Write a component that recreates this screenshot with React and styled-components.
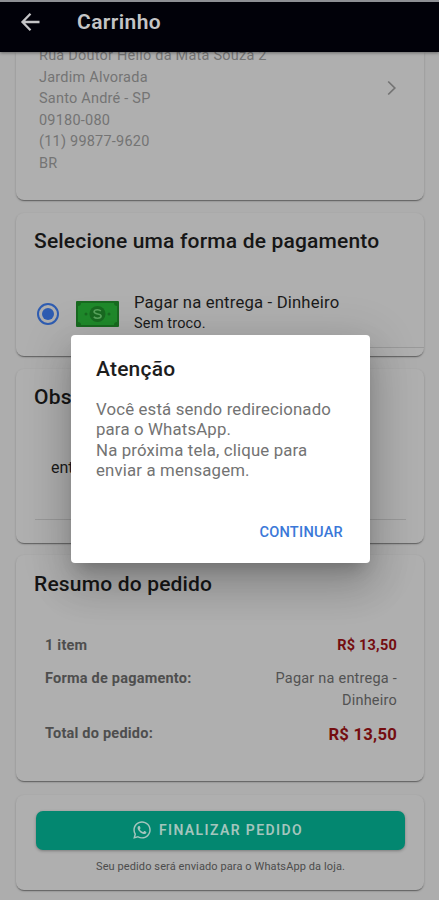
import styled, { createGlobalStyle } from "styled-components";
import { FaWhatsapp } from "react-icons/fa";

const GlobalStyle = createGlobalStyle`
  * {
    box-sizing: border-box;
  }
  body {
    margin: 0;
    font-family: Roboto, "Liberation Sans", sans-serif;
    background-color: #adadad;
  }
`;

const Wrapper = styled.div`
  position: relative;
  display: flex;
  flex-direction: column;
  width: 439px;
  height: 900px;
  overflow: hidden;
  background-color: #adadad;
`;

const Header = styled.header`
  display: flex;
  align-items: center;
  flex: none;
  height: 52px;
  padding: 0 0 10px 20px;
  border-top: 2px solid #8d8f94;
  background-color: #010109;
  color: #c4c4c6;
  box-shadow: 0 1px 3px rgba(0, 0, 0, 0.4);
  z-index: 1;
`;

const HeaderTitle = styled.h1`
  margin: 0 0 0 37px;
  font-size: 21px;
  line-height: 24px;
  font-weight: 600;
  letter-spacing: 0.4px;
`;

const Content = styled.main`
  display: flex;
  flex-direction: column;
  flex: 1;
  padding: 0 15px 0 16px;
`;

const Card = styled.section`
  flex: none;
  height: ${(props) => props.$height}px;
  margin-bottom: ${(props) => props.$gap || 13}px;
  border-radius: ${(props) => (props.$cut ? "0 0 8px 8px" : "8px")};
  background-color: #afafaf;
  box-shadow: 0 2px 1px -1px rgba(0, 0, 0, 0.28), 0 1px 2px rgba(0, 0, 0, 0.25);
`;

const CardTitle = styled.h2`
  margin: 0;
  padding: ${(props) => props.$top || 16}px 0 0 18px;
  font-size: 21px;
  line-height: 24px;
  font-weight: 500;
  letter-spacing: 0.18px;
  color: #161616;
`;

const Address = styled.div`
  display: flex;
  align-items: center;
  justify-content: space-between;
  height: 72px;
  padding: 0 27px 0 23px;
`;

const AddressLines = styled.div`
  align-self: flex-start;
  margin-top: -7px;
  font-size: 14.5px;
  line-height: 21.6px;
  letter-spacing: 0.22px;
  color: #747474;
`;

const PayRow = styled.div`
  display: flex;
  align-items: center;
  height: 74px;
  margin-top: 24px;
  padding-left: 21px;
`;

const Radio = styled.span`
  display: flex;
  align-items: center;
  justify-content: center;
  width: 22px;
  height: 22px;
  border: 2px solid #2e5cb1;
  border-radius: 50%;

  &::after {
    content: "";
    width: 12px;
    height: 12px;
    border-radius: 50%;
    background-color: #2e5cb1;
  }
`;

const Bill = styled.svg`
  margin: 0 15px 0 17px;
`;

const PayLabel = styled.div`
  margin-top: -3px;
  font-size: 16.7px;
  line-height: 21px;
  letter-spacing: 0.17px;
  color: #1b1b1b;
`;

const PayNote = styled.div`
  font-size: 14.5px;
  line-height: 21px;
`;

const Divider = styled.hr`
  margin: ${(props) => props.$margin};
  border: 0;
  border-top: 1px solid #999;
`;

const Note = styled.p`
  margin: 47px 0 0 35px;
  font-size: 16px;
  line-height: 24px;
  color: #1b1b1b;
`;

const Summary = styled.div`
  padding: 39px 27px 0 29px;
`;

const SummaryRow = styled.div`
  display: flex;
  justify-content: space-between;
  margin-bottom: ${(props) => props.$gap || 0}px;
  font-size: 14.5px;
  line-height: 22px;
  letter-spacing: 0.22px;
  color: #525252;
`;

const Label = styled.span`
  font-weight: 700;
  color: #4e4e4e;
`;

const Value = styled.span`
  width: 130px;
  text-align: right;
`;

const Price = styled.span`
  padding-top: ${(props) => (props.$total ? 1 : 0)}px;
  font-size: ${(props) => (props.$total ? 16.7 : 14.5)}px;
  font-weight: 700;
  color: #740d10;
`;

const Finish = styled.div`
  display: flex;
  flex-direction: column;
  align-items: center;
  padding: 16px 19px 0 20px;
`;

const FinishButton = styled.button`
  display: flex;
  align-items: center;
  justify-content: center;
  gap: 7px;
  width: 100%;
  height: 39px;
  padding: 0 6px 2px 0;
  border: 0;
  border-radius: 7px;
  background-color: #038770;
  box-shadow: 0 1px 3px rgba(0, 0, 0, 0.3);
  font-family: inherit;
  font-size: 14px;
  font-weight: 600;
  letter-spacing: 1.4px;
  color: #a4c5bd;
`;

const Hint = styled.p`
  margin: 10px 0 0;
  font-size: 11px;
  line-height: 14px;
  letter-spacing: 0.1px;
  color: #4c4c4c;
`;

const Overlay = styled.div`
  position: absolute;
  inset: 0;
  display: flex;
  align-items: center;
  justify-content: center;
  padding: 0 0 2px 2px;
  z-index: 2;
`;

const Dialog = styled.div`
  display: flex;
  flex-direction: column;
  width: 299px;
  height: 228px;
  padding: 22px 20px 20px 25px;
  border-radius: 4px;
  background-color: #fff;
  box-shadow: 0 11px 15px -7px rgba(0, 0, 0, 0.2),
    0 24px 38px 3px rgba(0, 0, 0, 0.14), 0 9px 46px 8px rgba(0, 0, 0, 0.12);
`;

const DialogTitle = styled.h2`
  margin: 0;
  font-size: 21px;
  line-height: 24px;
  font-weight: 500;
  letter-spacing: 0.2px;
  color: #1d1d1d;
`;

const DialogText = styled.p`
  margin: 18px 0 0;
  font-size: 16.8px;
  line-height: 20.4px;
  letter-spacing: 0.16px;
  color: #737373;
`;

const DialogButton = styled.button`
  align-self: flex-end;
  margin-top: auto;
  padding: 0 7px 0 0;
  border: 0;
  background: none;
  font-family: inherit;
  font-size: 14.6px;
  line-height: 22px;
  font-weight: 500;
  letter-spacing: 0.25px;
  color: #3b78d8;
`;

const BackArrow = () => (
  <svg width="20" height="20" viewBox="0 0 20 20" fill="none" stroke="currentColor" strokeWidth="2.3">
    <path d="M19.5 10H3M10.5 1.8L2.5 10l8 8.2" />
  </svg>
);

const Chevron = () => (
  <svg width="10" height="16" viewBox="0 0 10 16" fill="none" stroke="#737373" strokeWidth="1.7">
    <path d="M1.2 1.5L7.8 8l-6.6 6.5" />
  </svg>
);

const Money = () => (
  <Bill width="43" height="26" viewBox="0 0 43 26">
    <rect width="43" height="26" rx="1" fill="#186a20" />
    <path d="M5 2h33a3 3 0 0 0 3 3v16a3 3 0 0 0-3 3H5a3 3 0 0 0-3-3V5a3 3 0 0 0 3-3z" fill="#1f8a2b" />
    <circle cx="21.5" cy="13" r="8" fill="#186a20" />
    <circle cx="10" cy="13" r="1.5" fill="#186a20" />
    <circle cx="33" cy="13" r="1.5" fill="#186a20" />
    <path
      d="M24.8 10c-.7-.9-1.900-1.300-3.300-1.300-2 0-3.400.8-3.400 2.100 0 3 7 1.300 7 4.300 0 1.400-1.500 2.200-3.600 2.200-1.600 0-3-.5-3.700-1.500"
      fill="none"
      stroke="#58a35c"
      strokeWidth="1.6"
    />
  </Bill>
);

function App() {
  return (
    <Wrapper>
      <GlobalStyle />
      <Header>
        <BackArrow />
        <HeaderTitle>Carrinho</HeaderTitle>
      </Header>
      <Content>
        <Card $height={148} $cut>
          <Address>
            <AddressLines>
              Rua Doutor Hélio da Mata Souza 2
              <br />
              Jardim Alvorada
              <br />
              Santo André - SP
              <br />
              09180-080
              <br />
              (11) 99877-9620
              <br />
              BR
            </AddressLines>
            <Chevron />
          </Address>
        </Card>
        <Card $height={143}>
          <CardTitle>Selecione uma forma de pagamento</CardTitle>
          <PayRow>
            <Radio />
            <Money />
            <PayLabel>
              Pagar na entrega - Dinheiro
              <PayNote>Sem troco.</PayNote>
            </PayLabel>
          </PayRow>
          <Divider $margin="-4px 0 0 118px" />
        </Card>
        <Card $height={174} $gap={12}>
          <CardTitle>Obs</CardTitle>
          <Note>ent</Note>
          <Divider $margin="39px 18px 0 19px" />
        </Card>
        <Card $height={226} $gap={14}>
          <CardTitle $top={17}>Resumo do pedido</CardTitle>
          <Summary>
            <SummaryRow $gap={11}>
              <Label>1 item</Label>
              <Price>R$ 13,50</Price>
            </SummaryRow>
            <SummaryRow $gap={11}>
              <Label>Forma de pagamento:</Label>
              <Value>Pagar na entrega - Dinheiro</Value>
            </SummaryRow>
            <SummaryRow>
              <Label>Total do pedido:</Label>
              <Price $total>R$ 13,50</Price>
            </SummaryRow>
          </Summary>
        </Card>
        <Card $height={95}>
          <Finish>
            <FinishButton>
              <FaWhatsapp size={20} />
              FINALIZAR PEDIDO
            </FinishButton>
            <Hint>Seu pedido será enviado para o WhatsApp da loja.</Hint>
          </Finish>
        </Card>
      </Content>
      <Overlay>
        <Dialog>
          <DialogTitle>Atenção</DialogTitle>
          <DialogText>
            Você está sendo redirecionado
            <br />
            para o WhatsApp.
            <br />
            Na próxima tela, clique para
            <br />
            enviar a mensagem.
          </DialogText>
          <DialogButton>CONTINUAR</DialogButton>
        </Dialog>
      </Overlay>
    </Wrapper>
  );
}

export default App;
